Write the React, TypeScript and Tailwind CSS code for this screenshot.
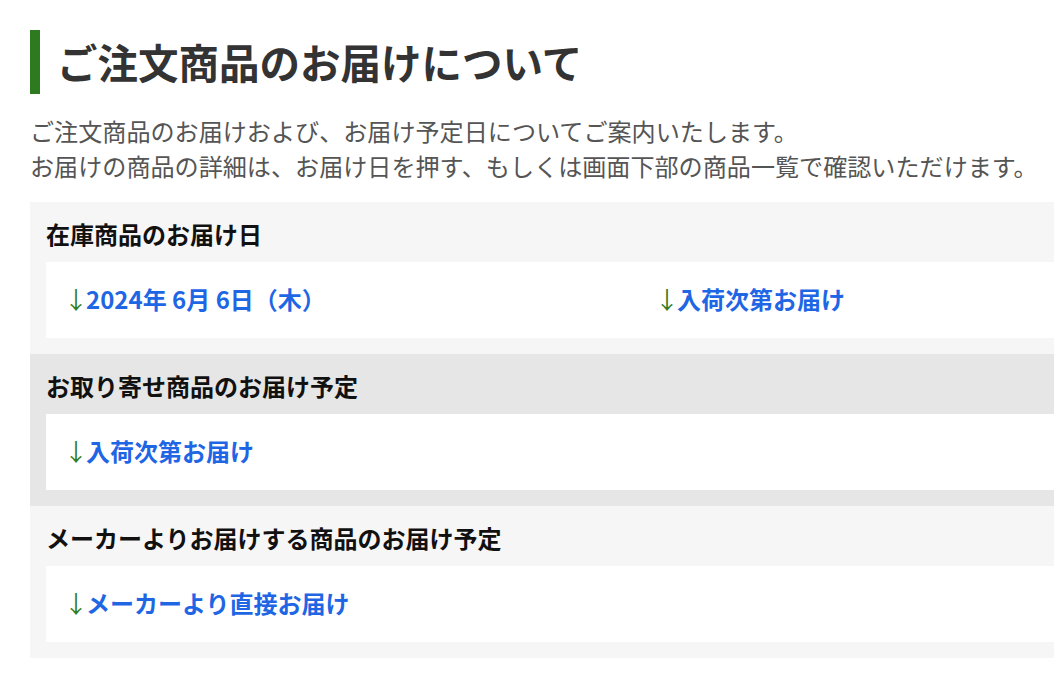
import React from 'react';

interface Section {
  title: string;
  tone: string;
  links: string[];
}

const sections: Section[] = [
  { title: '在庫商品のお届け日', tone: 'bg-[#f6f6f6]', links: ['2024年 6月 6日（木）', '入荷次第お届け'] },
  { title: 'お取り寄せ商品のお届け予定', tone: 'bg-[#e6e6e6]', links: ['入荷次第お届け'] },
  { title: 'メーカーよりお届けする商品のお届け予定', tone: 'bg-[#f6f6f6]', links: ['メーカーより直接お届け'] },
];

const DeliveryLink = ({ label }: { label: string }) => (
  <a href="#" className="flex items-center pl-[18px] text-[24px] font-bold text-[#1f66e5] no-underline">
    <span className="-mr-[2px] font-normal text-[#2f7d22]">↓</span>
    {label}
  </a>
);

const App = () => {
  return (
    <div
      className="h-[680px] w-screen overflow-hidden bg-white pl-[30px] pt-[30px]"
      style={{ fontFamily: '"Noto Sans CJK JP", "Noto Sans", sans-serif' }}
    >
      <div className="w-[1214px]">
        <h1 className="border-l-[10px] border-[#2d7a1f] pl-[17px] text-[40.5px] font-bold leading-[64px] text-[#333]">
          ご注文商品のお届けについて
        </h1>

        <p className="mt-[19px] text-[24.1px] leading-[35px] text-[#555]">
          ご注文商品のお届けおよび、お届け予定日についてご案内いたします。
          <br />
          お届けの商品の詳細は、お届け日を押す、もしくは画面下部の商品一覧で確認いただけます。
        </p>

        <div className="mt-[19px]">
          {sections.map(section => (
            <section key={section.title} className={`${section.tone} px-[16px] pb-[16px]`}>
              <h2 className="pt-[14px] pb-[10px] text-[24px] font-bold leading-[36px] text-[#111]">
                {section.title}
              </h2>
              <div className="grid h-[76px] grid-cols-2 items-center bg-white pb-[3px]">
                {section.links.map(link => (
                  <DeliveryLink key={link} label={link} />
                ))}
              </div>
            </section>
          ))}
        </div>
      </div>
    </div>
  );
};

export default App;
